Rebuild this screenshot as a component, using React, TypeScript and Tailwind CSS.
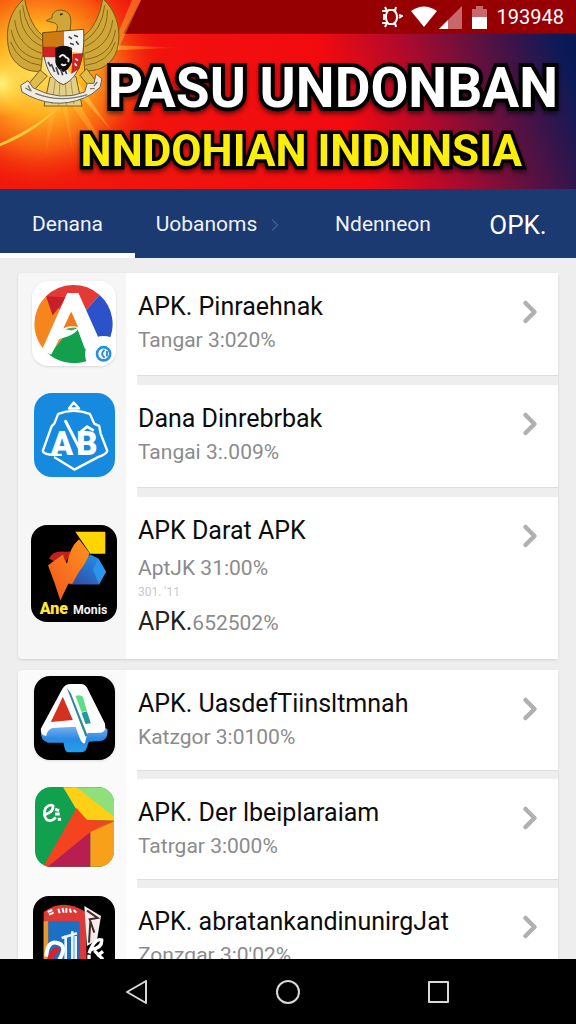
import { ChevronRight } from "lucide-react";
import React from "react";

const Burst = () => (
  <svg className="absolute inset-0 size-full" viewBox="0 0 576 190" preserveAspectRatio="none" aria-hidden="true">
    <defs>
      <linearGradient id="sky" x1="0" y1="0" x2="1" y2="-0.12">
        <stop offset="0" stopColor="#f0180c" />
        <stop offset="0.52" stopColor="#f20a0f" />
        <stop offset="0.66" stopColor="#b00a2c" />
        <stop offset="0.82" stopColor="#4d1245" />
        <stop offset="0.93" stopColor="#0b1a58" />
        <stop offset="1" stopColor="#03154f" />
      </linearGradient>
      <radialGradient id="glow" gradientUnits="userSpaceOnUse" cx="40" cy="70" r="125">
        <stop offset="0" stopColor="#ffe36a" />
        <stop offset="0.35" stopColor="#ffb320" />
        <stop offset="0.65" stopColor="#f9660f" stopOpacity="0.85" />
        <stop offset="1" stopColor="#f0180c" stopOpacity="0" />
      </radialGradient>
      <radialGradient id="spark" gradientUnits="userSpaceOnUse" cx="2" cy="84" r="34">
        <stop offset="0" stopColor="#fff27a" />
        <stop offset="1" stopColor="#ffd030" stopOpacity="0" />
      </radialGradient>
      <linearGradient id="ray" gradientUnits="userSpaceOnUse" x1="60" y1="80" x2="60" y2="180">
        <stop offset="0" stopColor="#ffe04a" stopOpacity="0.9" />
        <stop offset="1" stopColor="#ff5a10" stopOpacity="0" />
      </linearGradient>
      <linearGradient id="beam" gradientUnits="userSpaceOnUse" x1="100" y1="48" x2="182" y2="48">
        <stop offset="0" stopColor="#ffc93c" />
        <stop offset="1" stopColor="#ff5a10" stopOpacity="0" />
      </linearGradient>
    </defs>
    <rect width="576" height="190" fill="url(#sky)" />
    <rect width="200" height="190" fill="url(#glow)" />
    <rect width="60" height="130" fill="url(#spark)" />
    <path d="M60 95 L74 158 L66 100Z M64 95 L128 186 L72 92Z M50 95 L45 160 L58 100Z M70 85 L112 132 L76 80Z" fill="url(#ray)" />
    <path d="M100 45 L182 48 L100 51Z" fill="url(#beam)" />
    <path d="M0 147 Q38 132 62 104 Q40 126 0 144Z" fill="#ffc93c" />
    <path d="M141 0 H576 V34 H123Z" fill="#970002" />
    <path d="M118 50 L141 0 H132 L112 48Z" fill="#ffcf3a" opacity="0.4" />
  </svg>
);

const Garuda = () => (
  <svg className="absolute left-0 top-0 w-[120px] h-[110px]" viewBox="0 0 360 330" role="img" aria-label="Garuda">
    <g fill="#cfa638" stroke="#7a5a14" strokeWidth="3" strokeLinejoin="round">
      <path d="M74 -4 C30 30 14 90 26 145 C34 185 70 218 122 214 L134 110 C108 96 82 50 74 -4Z" />
      <path d="M308 -4 C348 30 366 90 352 145 C342 185 308 216 254 212 L248 108 C276 94 300 50 308 -4Z" />
      <path d="M150 232 L228 230 L246 318 L132 318Z" fill="#e4cf86" />
      <path d="M120 210 L142 228 L100 272 L78 262Z M260 206 L240 226 L272 266 L294 252Z" fill="#e0bd4a" />
      <path d="M138 62 L156 54 C154 36 174 26 192 32 C212 38 216 56 210 92 L168 96 C176 80 172 70 160 68 Z" />
    </g>
    <g fill="none" stroke="#8a6818" strokeWidth="3">
      <path d="M60 30 Q60 110 128 140 M44 60 Q54 140 126 160 M34 90 Q48 168 124 178 M32 126 Q56 188 122 196 M68 16 Q76 92 130 124" />
      <path d="M322 30 Q324 110 254 140 M338 60 Q330 140 254 160 M346 90 Q336 168 256 178 M346 126 Q326 188 256 196 M314 16 Q306 92 252 124" />
      <path d="M166 240 L156 312 M180 240 L176 316 M196 240 L200 316 M212 240 L222 312" stroke="#a8955a" />
    </g>
    <path d="M180 44 l8 -2" stroke="#3b2a08" strokeWidth="5" />
    <path d="M128 98 L192 92 V152 L126 166Z" fill="#cf7a12" />
    <path d="M192 92 L251 88 L250 160 L192 154Z" fill="#f4f4f4" />
    <path d="M127 140 H170 V172 H128Z M218 162 L250 160 L238 206 L214 222Z" fill="#cf2222" />
    <path d="M128 172 H166 L214 222 L236 208 C226 236 206 248 190 252 C158 244 134 216 128 172Z" fill="#ececec" />
    <path d="M166 144 Q190 130 216 144 V186 Q206 210 190 216 Q170 208 166 186Z" fill="#0c0c0c" />
    <path d="M178 172 q10 -14 20 0 q12 4 6 14 M184 192 q8 8 14 0" fill="none" stroke="#eee" strokeWidth="6" />
    <path d="M206 110 l10 6 m6 -10 l12 4 m-24 20 l12 4 m6 -10 l8 10 m-26 12 l6 4 M144 186 l8 14 m2 -8 l10 24 m4 -14 l8 22 m6 -18 l6 20 m8 -14 l4 10" stroke="#444" strokeWidth="5" />
    <path d="M226 176 l8 6 m-10 8 l6 8" stroke="#fff" strokeWidth="5" />
    <path d="M128 98 L251 88 C254 160 244 230 190 254 C142 236 126 176 128 98Z" fill="none" stroke="#6d4b12" strokeWidth="3" />
    <path d="M62 256 L84 242 L100 264 Q182 306 254 276 L262 250 L282 250 L288 222 L306 236 L300 262 L276 282 Q184 334 88 288 L66 276Z" fill="#f0ece0" stroke="#6b6455" strokeWidth="3" />
    <path d="M76 264 l14 8 m-6 -16 l10 18 M106 280 Q180 310 262 284 M282 258 l10 -12 m-22 20 l14 0" fill="none" stroke="#777" strokeWidth="4" />
  </svg>
);

const StatusBar = () => (
  <div className="relative flex h-[34px] items-center justify-end pr-3 text-white">
    <svg className="w-[22px] h-[22px]" viewBox="0 0 22 22" fill="none" stroke="currentColor" strokeWidth="2" role="img" aria-label="Vibrate">
      <path d="M8 4 H12 Q16 6 16 11 Q16 16 12 18 H8 Q5 16 5 11 Q5 6 8 4Z M4 1 L6 5 M15 1 L14 5 M4 21 L6 17 M15 21 L14 17 M1 5 H6 M1 17 H6 M3 8 V14" />
      <path d="M18 9 L21 10 L18 12" />
    </svg>
    <svg className="ml-2 w-[26px] h-[22px]" viewBox="0 0 26 22" fill="currentColor" role="img" aria-label="Wi-Fi">
      <path d="M0 5 Q13 -4 26 5 L13 21Z" />
    </svg>
    <svg className="ml-0.5 w-[23px] h-[23px]" viewBox="0 0 23 23" role="img" aria-label="Signal">
      <path d="M0 23 L23 0 V23Z" fill="#c9676b" />
      <path d="M0 23 L9 14 V23Z" fill="white" />
    </svg>
    <svg className="ml-2.5 w-[15px] h-[23px]" viewBox="0 0 15 23" role="img" aria-label="Battery">
      <path d="M0 3 H4 V0 H11 V3 H15 V11 H0Z" fill="#c9676b" />
      <path d="M0 11 H15 V23 H0Z" fill="white" />
    </svg>
    <span className="ml-2.5 text-xl leading-6">193948</span>
  </div>
);

const tabs = ["Denana", "Uobanoms", "Ndenneon", "OPK."];

const IconPie = () => (
  <svg className="w-[84px] h-[85px] rounded-2xl bg-white shadow" viewBox="0 0 253 257" aria-hidden="true">
    <path d="M125 130 L42 46 A118 118 0 0 1 204 42Z" fill="#e23a36" />
    <path d="M125 130 L204 42 A118 118 0 0 1 228 188Z" fill="#2b52c8" />
    <path d="M125 130 L228 188 A118 118 0 0 1 52 223Z" fill="#12a04d" />
    <path d="M125 130 L52 223 A118 118 0 0 1 42 46Z" fill="#f5851c" />
    <path d="M42 46 L62 104 L104 50Z" fill="#c81f2a" />
    <path d="M106 36 H140 L206 184 L160 206 L120 100 L58 222 L28 212Z" fill="white" />
    <path d="M118 92 L140 142 Q118 134 92 148Z" fill="#ee7a1b" />
    <path d="M92 144 Q116 132 142 140 Q132 166 70 178Z" fill="white" />
    <path d="M100 146 Q120 138 138 142 L120 150Z" fill="#3fae55" />
    <circle cx="216" cy="222" r="56" fill="white" />
    <circle cx="216" cy="220" r="20" fill="none" stroke="#2a8fe0" strokeWidth="8" />
    <path d="M219 208 Q204 220 219 232 M226 212 V228" fill="none" stroke="#2a8fe0" strokeWidth="6" />
  </svg>
);

const IconShield = () => (
  <svg className="w-[81px] h-[84px] rounded-[18px] bg-[#168ade]" viewBox="0 0 241 250" aria-hidden="true">
    <g fill="none" stroke="white" strokeWidth="7" strokeLinejoin="round" strokeLinecap="round">
      <path d="M104 46 L118 28 L134 46Z" />
      <path d="M50 106 Q52 96 60 92 L72 62 Q118 44 166 62 L180 92 L194 98 L198 120 L218 172 Q216 182 192 190 L120 228 L62 192 M50 106 L26 172 Q28 184 60 184 H80" />
      <path d="M94 84 L142 178" strokeWidth="9" />
    </g>
    <text x="50" y="184" className="font-['Roboto',sans-serif] font-black text-[98px]" fill="white">A</text>
    <text x="126" y="184" className="font-['Roboto',sans-serif] font-black text-[98px]" fill="white">B</text>
    <path d="M136 118 L158 100 L178 112" fill="none" stroke="white" strokeWidth="8" />
  </svg>
);

const IconMonis = () => (
  <svg className="w-[86px] h-[97px] rounded-2xl bg-black" viewBox="0 0 258 290" aria-hidden="true">
    <defs>
      <linearGradient id="orange" x1="0" y1="1" x2="1" y2="0">
        <stop offset="0" stopColor="#f2551c" />
        <stop offset="1" stopColor="#ff9420" />
      </linearGradient>
      <linearGradient id="blue" x1="1" y1="0" x2="0" y2="1">
        <stop offset="0" stopColor="#1f9bf0" />
        <stop offset="1" stopColor="#3346a0" />
      </linearGradient>
    </defs>
    <path d="M178 88 L202 100 L225 140 L204 178 H116 L150 110Z" fill="url(#blue)" />
    <path d="M202 100 L225 140 L204 178 L186 134Z" fill="#2b95ee" />
    <path d="M133 20 H223 V86 H178Z" fill="#ffd400" />
    <path d="M54 100 Q66 74 104 80 L124 78 L96 124Z" fill="#c2201c" />
    <path d="M51 120 L96 88 Q100 106 108 116 Q116 66 144 42 L176 84 Q166 112 144 140 L124 176 H112 L88 226 Q72 174 51 120Z" fill="url(#orange)" />
    <text x="26" y="268" className="font-['Roboto',sans-serif] font-black text-[48px]" fill="#ffe93a">Ane</text>
    <text x="126" y="266" className="font-['Roboto',sans-serif] font-bold text-[37px]" fill="#f2f2f2">Monis</text>
  </svg>
);

const IconLayers = () => (
  <svg className="w-[81px] h-[84px] rounded-2xl bg-black shadow" viewBox="0 0 242 252" aria-hidden="true">
    <defs>
      <linearGradient id="base" x1="0" y1="0" x2="0" y2="1">
        <stop offset="0" stopColor="#7fb4f2" />
        <stop offset="0.5" stopColor="#2a8ae2" />
        <stop offset="1" stopColor="#22a0ee" />
      </linearGradient>
    </defs>
    <path d="M20 164 L50 148 H200 L220 160 Q222 190 204 194 L164 197 L156 220 Q152 229 140 229 H100 Q92 227 88 200 H42 Q18 194 20 164Z" fill="url(#base)" />
    <path d="M84 40 Q92 24 110 24 H142 Q156 26 162 42 L212 142 Q218 168 200 170 L160 171 L152 202 Q144 204 138 190 L124 152 L54 156 Q38 164 36 180 Q18 176 20 158Z" fill="white" />
    <path d="M86 62 L116 132 L50 138Z" fill="#d2321f" />
    <path d="M98 36 L110 52 L160 178 L154 182Z" fill="#2a8a98" />
    <path d="M124 60 Q136 54 146 62 L158 104 L142 108Z" fill="#5fdc84" />
    <path d="M142 110 L158 106 L170 142 L154 144Z" fill="#1d9c9a" />
  </svg>
);

const IconPlay = () => (
  <svg className="w-[79px] h-[80px] rounded-2xl bg-[#11a14e]" viewBox="0 0 236 238" aria-hidden="true">
    <path d="M108 0 H236 V98Z" fill="#8fe07a" />
    <path d="M84 0 H124 L236 88 V100 L155 98 L122 64Z" fill="#fdd016" />
    <path d="M124 62 L155 98 L236 100 V104 L165 136 L40 238 H24Z" fill="#f4431f" />
    <path d="M236 102 V238 H165 V134Z" fill="#f9a01b" />
    <path d="M165 134 V238 H38Z" fill="#b81f50" />
    <path d="M165 134 L236 102 L200 112Z" fill="#d9601a" />
    <path d="M30 82 Q56 74 54 56 Q44 50 32 62 Q22 84 36 98 Q50 104 62 90" fill="none" stroke="white" strokeWidth="8" />
    <path d="M60 66 L72 70 M60 80 H74 M68 96 H78" stroke="white" strokeWidth="9" />
  </svg>
);

const IconCrest = () => (
  <svg className="w-[82px] h-[84px] rounded-2xl bg-black" viewBox="0 0 246 252" aria-hidden="true">
    <path d="M32 48 Q90 4 158 48 L162 252 H32Z" fill="#dc3a36" />
    <path d="M32 76 H46 V252 H32Z" fill="#e8962e" />
    <path d="M46 76 H140 V252 H46Z" fill="#1a70c4" />
    <path d="M154 30 L204 60 L192 132 L162 150Z" fill="#f3eeee" />
    <path d="M162 44 L194 66 L170 70 L184 110 M172 76 L168 140" fill="none" stroke="#4d2628" strokeWidth="6" />
    <path d="M44 48 l14 -6 m-10 14 l14 -6 M76 38 l4 14 m8 -16 l4 14 m8 -14 v14 m10 -12 l4 12 m8 -8 l8 8" stroke="#fff" strokeWidth="6" />
    <path d="M40 182 Q42 136 70 140 Q102 146 84 182 L58 230" fill="none" stroke="white" strokeWidth="12" />
    <path d="M50 200 Q54 168 78 158" fill="none" stroke="#d9242b" strokeWidth="18" />
    <path d="M98 118 V230 M118 106 V230 M86 126 L132 112 M128 120 V230" stroke="#e9f4fc" strokeWidth="8" />
    <path d="M168 172 Q186 124 206 132 Q208 156 176 160 M184 164 L210 190 M168 176 V216 M192 180 L210 166" fill="none" stroke="white" strokeWidth="10" />
  </svg>
);

const groups = [
  {
    id: "top",
    side: "bg-[#f6f6f7]",
    row: "min-h-[102px]",
    gap: "h-2.5",
    apps: [
      { title: "APK. Pinraehnak", sub: "Tangar 3:020%", icon: <IconPie />, cell: "pt-2" },
      { title: "Dana Dinrebrbak", sub: "Tangai 3:.009%", icon: <IconShield />, cell: "pt-2" },
      { title: "APK Darat APK", sub: "AptJK 31:00%", icon: <IconMonis />, cell: "pt-7", note: "301. '11", extra: "652502%" },
    ],
  },
  {
    id: "more",
    side: "bg-[#fafafb]",
    row: "min-h-[100px]",
    gap: "h-[9px]",
    apps: [
      { title: "APK. UasdefTiinsltmnah", sub: "Katzgor 3:0100%", icon: <IconLayers />, cell: "pt-1.5" },
      { title: "APK. Der lbeiplaraiam", sub: "Tatrgar 3:000%", icon: <IconPlay />, cell: "pt-2" },
      { title: "APK. abratankandinunirgJat", sub: "Zonzqar 3:0'02%", icon: <IconCrest />, cell: "pt-2" },
    ],
  },
];

const AppRow = ({ app, row }: { app: any; row: string }) => (
  <a href="#" className={`flex ${row}`}>
    <span className={`flex w-27 shrink-0 items-start justify-center pl-1 ${app.cell}`}>{app.icon}</span>
    <span className="flex grow items-start justify-between bg-white pl-3 pr-2.5 pt-[17px]">
      <span className={app.extra ? "flex flex-col pb-5" : "flex flex-col"}>
        <span className="text-[25px] leading-[34px] text-[#0c0c0c]">{app.title}</span>
        <span className={`text-[21px] leading-8 text-[#8b8b8d] ${app.extra ? "pt-1" : ""}`}>{app.sub}</span>
        {app.note && <span className="text-xs leading-4 text-[#c8c8c8]">{app.note}</span>}
        {app.extra && (
          <span className="pt-1.5 text-[21px] leading-8 text-[#8b8b8d]">
            <span className="text-[25px] leading-8 text-[#222]">APK.</span>
            {app.extra}
          </span>
        )}
      </span>
      <ChevronRight className="mt-1 -ml-8 size-9 shrink-0 text-[#b0b0b0]" strokeWidth={3} />
    </span>
  </a>
);

export default function App() {
  return (
    <div className="flex h-dvh flex-col overflow-hidden bg-[#eeeeef] font-['Roboto',sans-serif]">
      <header className="relative shrink-0 overflow-hidden">
        <Burst />
        <Garuda />
        <StatusBar />
        <div className="relative flex flex-col pr-[18px] pb-2.5 text-right font-bold [paint-order:stroke_fill]">
          <h1 className="pt-5 text-[55px] leading-[68px] whitespace-nowrap text-white [-webkit-text-stroke:8px_black] drop-shadow-[0_3px_2px_rgba(0,0,0,0.5)]">PASU UNDONBAN</h1>
          <p className="pt-0.5 pr-9 text-[44px] leading-[55px] whitespace-nowrap text-[#fbee0c] [-webkit-text-stroke:7px_black] drop-shadow-[0_3px_2px_rgba(0,0,0,0.5)]">NNDOHIAN INDNNSIA</p>
        </div>
      </header>

      <nav className="grid h-[69px] shrink-0 grid-cols-[135fr_171fr_154fr_116fr] bg-[#1c3a72] text-[21px] text-[#eef2fa]">
        {tabs.map((tab, i) => (
          <button
            key={tab}
            type="button"
            className={`flex items-center justify-center border-b-5 pt-2 ${i === 0 ? "border-white" : "border-transparent"} ${i === 3 ? "text-[26px] text-white" : ""}`}
          >
            {tab}
            {i === 1 && <ChevronRight className="ml-2 size-5 text-[#3c5a94]" strokeWidth={2} />}
          </button>
        ))}
      </nav>

      <main className="flex min-h-0 grow flex-col gap-[11px] overflow-hidden pt-[15px] pr-[18px] pl-[18px]">
        {groups.map((group) => (
          <ul key={group.id} className={`shrink-0 rounded-sm shadow ${group.side}`}>
            {group.apps.map((app, i) => (
              <li key={app.title}>
                {i > 0 && (
                  <div className="ml-27 bg-white pl-[11px]">
                    <div className={`border-t border-[#dedee0] bg-[#eeeeef] ${group.gap}`} />
                  </div>
                )}
                <AppRow app={app} row={group.row} />
              </li>
            ))}
          </ul>
        ))}
      </main>

      <footer className="flex h-[65px] shrink-0 items-center justify-center gap-[127px] bg-black text-[#d8d8d8]">
        <button type="button" aria-label="Back">
          <svg className="size-6" viewBox="0 0 24 24" fill="none" stroke="currentColor" strokeWidth="2" strokeLinejoin="round">
            <path d="M21 1 V23 L2 12Z" />
          </svg>
        </button>
        <button type="button" aria-label="Home">
          <svg className="size-6" viewBox="0 0 24 24" fill="none" stroke="currentColor" strokeWidth="2">
            <circle cx="12" cy="12" r="11" />
          </svg>
        </button>
        <button type="button" aria-label="Recent apps">
          <svg className="size-6" viewBox="0 0 24 24" fill="none" stroke="currentColor" strokeWidth="2" strokeLinejoin="round">
            <path d="M2 2 H21 V22 H2Z" />
          </svg>
        </button>
      </footer>
    </div>
  );
}
